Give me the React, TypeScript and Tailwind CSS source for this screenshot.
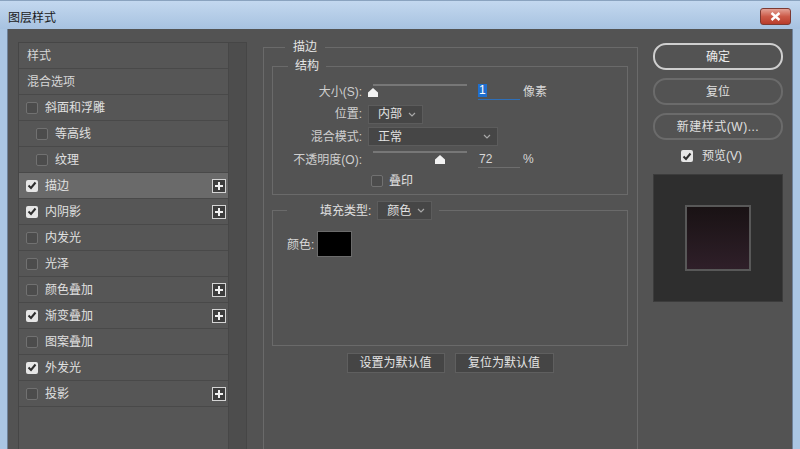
import React from 'react';

type Item = {
  label: string;
  header?: boolean;
  checked?: boolean;
  sub?: boolean;
  plus?: boolean;
  active?: boolean;
};

const items: Item[] = [
  { label: '样式', header: true },
  { label: '混合选项', header: true },
  { label: '斜面和浮雕' },
  { label: '等高线', sub: true },
  { label: '纹理', sub: true },
  { label: '描边', checked: true, plus: true, active: true },
  { label: '内阴影', checked: true, plus: true },
  { label: '内发光' },
  { label: '光泽' },
  { label: '颜色叠加', plus: true },
  { label: '渐变叠加', checked: true, plus: true },
  { label: '图案叠加' },
  { label: '外发光', checked: true },
  { label: '投影', plus: true },
];

function CheckBox({ checked = false }: { checked?: boolean }) {
  if (checked) {
    return (
      <div className="w-[12px] h-[12px] rounded-[2px] bg-[#e6e6e6] flex items-center justify-center shrink-0">
        <svg width="10" height="9" viewBox="0 0 10 9">
          <path d="M1.5 4.5 L4 7 L8.5 1.5" fill="none" stroke="#2e2e2e" strokeWidth="2" />
        </svg>
      </div>
    );
  }
  return <div className="w-[12px] h-[12px] rounded-[2px] border border-[#717171] bg-[#4c4c4c] shrink-0" />;
}

function PlusBox() {
  return (
    <div className="w-[14px] h-[14px] border border-[#d4d4d4] bg-[#3d3d3d] flex items-center justify-center">
      <svg width="8" height="8" viewBox="0 0 8 8">
        <path d="M4 0 V8 M0 4 H8" stroke="#f0f0f0" strokeWidth="2" />
      </svg>
    </div>
  );
}

function Chevron() {
  return (
    <svg width="8" height="5" viewBox="0 0 8 5">
      <path d="M1 1 L4 4 L7 1" fill="none" stroke="#a8a8a8" strokeWidth="1.2" />
    </svg>
  );
}

function Select({ value, width }: { value: string; width: string }) {
  return (
    <div className={`${width} h-[19px] bg-[#464646] border border-[#5c5c5c] flex items-center justify-between pl-[9px] pr-[6px] text-[#e2e2e2]`}>
      <span>{value}</span>
      <Chevron />
    </div>
  );
}

function Slider({ pos }: { pos: number }) {
  return (
    <div className="w-[100px] h-[22px] flex flex-col justify-start pt-[3px]">
      <div className="ml-[5px] w-[94px] h-[2px] bg-[#777777]" />
      <div className="h-[10px] mt-[2px] flex">
        <div style={{ width: `${pos}px` }} />
        <svg width="10" height="9" viewBox="0 0 10 9">
          <polygon points="5,0 10,4.5 10,9 0,9 0,4.5" fill="#f2f2f2" />
        </svg>
      </div>
    </div>
  );
}

export default function App() {
  return (
    <div className="w-[800px] h-[449px] overflow-hidden flex flex-col bg-[#abc6e3] font-['Liberation_Sans','Noto_Sans_CJK_SC',sans-serif] text-[12px] leading-[16px]">
      {/* title bar */}
      <div className="h-[29px] shrink-0 flex items-center justify-between pl-[8px] pr-[9px] pt-[3px] bg-gradient-to-b from-[#c3d8ef] to-[#a7c2e0] border-t border-[#8aa3bf]">
        <span className="text-[#1b1b1b] font-['Noto_Sans_CJK_SC',sans-serif]">图层样式</span>
        <div className="w-[31px] h-[17px] rounded-[3px] border border-[#7d3a32] bg-gradient-to-b from-[#e3a196] via-[#cc5a48] to-[#b83c2b] flex items-center justify-center">
          <svg width="11" height="9" viewBox="0 0 11 9">
            <path d="M1.5 1 L9.5 8 M9.5 1 L1.5 8" stroke="#ffffff" strokeWidth="2.4" />
          </svg>
        </div>
      </div>

      {/* body */}
      <div className="flex-1 mx-[7px] bg-[#535353] border-x border-[#6f8299] flex items-start pl-[10px] text-[#dadada] font-['Liberation_Sans','Noto_Sans_CJK_SC',sans-serif]">
        {/* style list */}
        <div className="mt-[13px] w-[229px] h-[420px] border border-[#464646] flex shrink-0">
          <div className="w-[209px] flex flex-col bg-[#565656]">
            {items.map((it) => (
              <div
                key={it.label}
                className={`h-[26px] shrink-0 border-b border-[#494949] flex items-center pr-[2px] ${it.active ? 'bg-[#6a6a6a]' : ''} ${it.sub ? 'pl-[17px]' : 'pl-[7px]'}`}
              >
                {it.header ? (
                  <span className="pl-[1px] text-[#d6d6d6]">{it.label}</span>
                ) : (
                  <div className="flex items-center gap-[7px] flex-1">
                    <CheckBox checked={it.checked} />
                    <span className="text-[#e0e0e0]">{it.label}</span>
                  </div>
                )}
                {it.plus && (
                  <div className="ml-auto">
                    <PlusBox />
                  </div>
                )}
              </div>
            ))}
          </div>
          <div className="flex-1 bg-[#4d4d4d] border-l border-[#474747]" />
        </div>

        {/* stroke settings */}
        <fieldset className="ml-[16px] mt-[10px] w-[375px] h-[430px] border border-[#6a6a6a] pl-[8px] pt-[3px] shrink-0">
          <legend className="ml-[13px] px-[8px] text-[#e4e4e4]">描边</legend>

          <fieldset className="w-[356px] border border-[#6a6a6a] pt-[7px] pb-[3px]">
            <legend className="ml-[15px] px-[7px] text-[#e4e4e4]">结构</legend>
            <div className="grid grid-cols-[89px_1fr] gap-x-[6px] items-center">
              <span className="h-[22px] flex items-center justify-end text-[#cfcfcf]">大小(S):</span>
              <div className="h-[22px] flex items-start">
                <Slider pos={0} />
                <div className="ml-[10px] w-[42px] h-[16px] mt-[3px] border-b border-[#2e6fb8] flex items-start">
                  <span className="bg-[#1f6fce] text-white px-[1px] leading-[13px] h-[13px]">1</span>
                </div>
                <span className="ml-[3px] mt-[3px] text-[#d8d8d8]">像素</span>
              </div>

              <span className="h-[22px] flex items-center justify-end text-[#cfcfcf]">位置:</span>
              <div className="h-[22px] flex items-center">
                <Select value="内部" width="w-[55px]" />
              </div>

              <span className="h-[23px] flex items-center justify-end text-[#cfcfcf]">混合模式:</span>
              <div className="h-[23px] flex items-center">
                <Select value="正常" width="w-[130px]" />
              </div>

              <span className="h-[23px] flex items-center justify-end text-[#cfcfcf]">不透明度(O):</span>
              <div className="h-[23px] flex items-start">
                <Slider pos={67} />
                <div className="ml-[10px] w-[42px] h-[17px] mt-[3px] border-b border-[#6e6e6e] text-[#d8d8d8] pl-[1px]">72</div>
                <span className="ml-[3px] mt-[3px] text-[#d8d8d8]">%</span>
              </div>

              <span className="h-[20px]" />
              <div className="h-[20px] flex items-center gap-[6px] pl-[3px]">
                <CheckBox />
                <span className="text-[#e0e0e0]">叠印</span>
              </div>
            </div>
          </fieldset>

          <fieldset className="mt-[6px] w-[356px] border border-[#6a6a6a]">
            <legend className="ml-[14px] pl-[33px] pr-[7px]">
              <div className="flex items-center gap-[6px]">
                <span className="text-[#e0e0e0]">填充类型:</span>
                <Select value="颜色" width="w-[55px]" />
              </div>
            </legend>
            <div className="h-[125px] pt-[11px] pl-[14px] flex items-start gap-[3px]">
              <span className="mt-[6px] text-[#d8d8d8]">颜色:</span>
              <div className="w-[35px] h-[26px] bg-black border border-[#6b6b6b]" />
            </div>
          </fieldset>

          <div className="w-[356px] mt-[7px] flex justify-center gap-[10px]">
            <div className="w-[98px] h-[20px] bg-[#454545] border border-[#5f5f5f] flex items-center justify-center text-[#e4e4e4]">设置为默认值</div>
            <div className="w-[99px] h-[20px] bg-[#454545] border border-[#5f5f5f] flex items-center justify-center text-[#e4e4e4]">复位为默认值</div>
          </div>
        </fieldset>

        {/* right column */}
        <div className="ml-[15px] mt-[14px] w-[130px] flex flex-col shrink-0">
          <div className="h-[27px] rounded-[13px] border-2 border-[#cfcfcf] flex items-center justify-center text-[#ececec]">确定</div>
          <div className="mt-[8px] h-[27px] rounded-[13px] border-2 border-[#6b6b6b] flex items-center justify-center text-[#e0e0e0]">复位</div>
          <div className="mt-[8px] h-[27px] rounded-[13px] border-2 border-[#6b6b6b] flex items-center justify-center text-[#e0e0e0] tracking-[0.5px]">新建样式(W)...</div>
          <div className="mt-[9px] h-[14px] flex items-center gap-[9px] pl-[28px]">
            <CheckBox checked />
            <span className="text-[#e0e0e0]">预览(V)</span>
          </div>
          <div className="mt-[11px] h-[128px] bg-[#2e2e2e] border border-[#3c3c3c] flex items-center justify-center">
            <div className="w-[66px] h-[66px] border-2 border-[#585858] bg-gradient-to-b from-[#191214] to-[#2f1f29]" />
          </div>
        </div>
      </div>
    </div>
  );
}
